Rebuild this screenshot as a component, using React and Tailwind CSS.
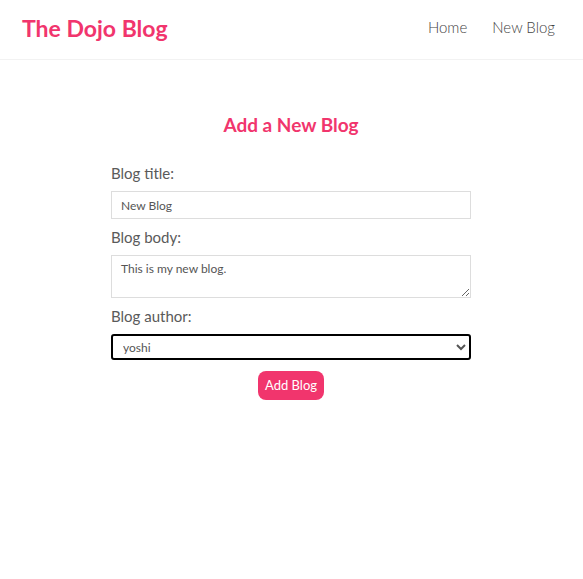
import React from "react";

export default function App() {
  const font = { fontFamily: '"Lato", "Noto Sans", sans-serif' };
  return (
    <div className="min-h-[579px] bg-white text-[#333]" style={font}>
      <nav className="h-[60px] border-b border-[#f2f2f2] flex items-center justify-between pl-[22px] pr-[28px] pb-[3px]">
        <h1 className="text-[23px] font-bold text-[#f1356d] leading-none">The Dojo Blog</h1>
        <div className="flex items-center gap-[25px] text-[15px] font-light text-[#444] mb-[2px]">
          <a href="#">Home</a>
          <a href="#">New Blog</a>
        </div>
      </nav>
      <div className="w-[360px] ml-[111px] flex flex-col items-center pt-[55px]">
        <h2 className="text-[19px] font-bold text-[#f1356d] leading-none">Add a New Blog</h2>
        <form className="w-full flex flex-col mt-[30px]">
          <label className="block text-[15px] text-[#5a5a5a] leading-[18px] h-[18px]">Blog title:</label>
          <input
            type="text"
            defaultValue="New Blog"
            className="block mt-[9px] h-[28px] w-full border border-[#ddd] px-[9px] text-[12px] text-[#555] outline-none"
            style={font}
          />
          <label className="block mt-[9px] text-[15px] text-[#5a5a5a] leading-[18px] h-[18px]">Blog body:</label>
          <textarea
            defaultValue="This is my new blog."
            className="mt-[9px] h-[43px] w-full border border-[#ddd] px-[9px] pt-[4px] pb-[5px] text-[12px] text-[#555] outline-none block resize-y"
            style={font}
          />
          <label className="block mt-[9px] text-[15px] text-[#5a5a5a] leading-[18px] h-[18px]">Blog author:</label>
          <select
            defaultValue="yoshi"
            className="block mt-[9px] h-[26px] w-full border-2 border-black rounded-[3px] px-[6px] text-[12px] text-[#555] outline-none bg-white"
            style={font}
          >
            <option value="mario">mario</option>
            <option value="yoshi">yoshi</option>
          </select>
          <div className="flex justify-center mt-[11px]">
            <button
              type="button"
              className="h-[29px] w-[66px] rounded-[8px] bg-[#f1356d] text-white text-[13px]"
              style={font}
            >
              Add Blog
            </button>
          </div>
        </form>
      </div>
    </div>
  );
}
